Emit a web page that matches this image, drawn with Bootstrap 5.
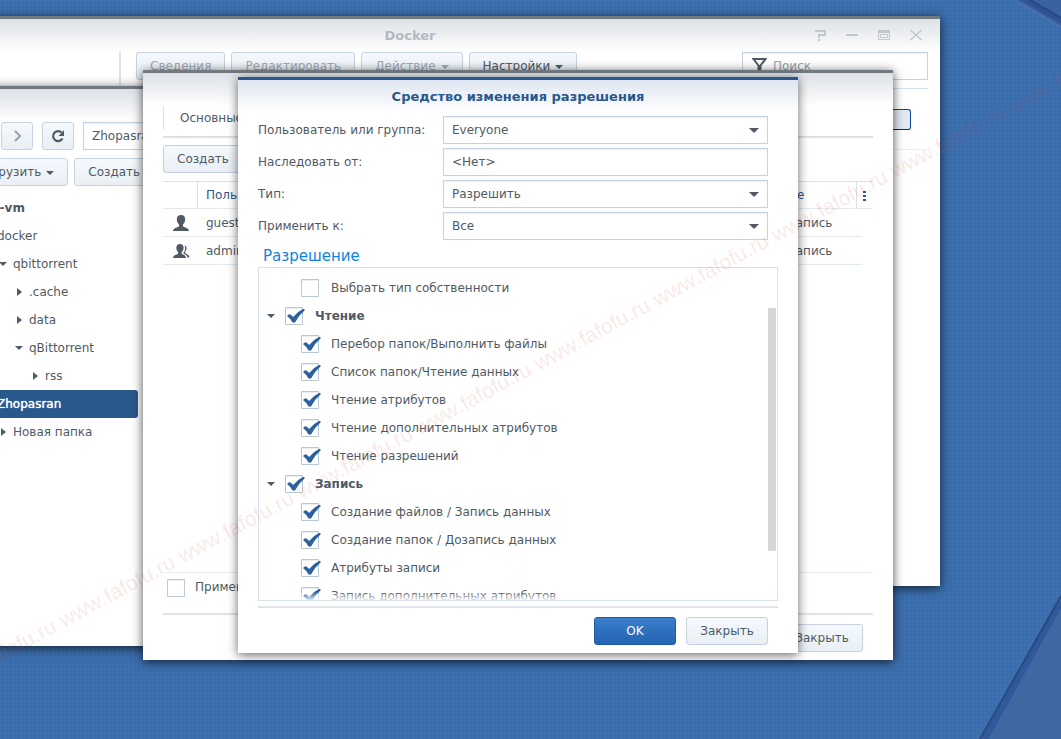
<!DOCTYPE html>
<html lang="ru">
<head>
<meta charset="utf-8">
<meta name="viewport" content="width=device-width, initial-scale=1">
<title>Средство изменения разрешения</title>
<link href="https://cdn.jsdelivr.net/npm/bootstrap@5.3.0/dist/css/bootstrap.min.css" rel="stylesheet">
<style>
  :root { --ink: #505a64; --line: #c6d2e0; --hair: #d9e2ec; --accent: #2a588c; }
  body { font: 12px/16px "DejaVu Sans", Verdana, sans-serif; color: var(--ink); }
  .desktop {
    height: 100vh;
    background:
      radial-gradient(circle at 1px 1px, rgba(255,255,255,.02) 1px, transparent 1px) 0 0 / 4px 4px,
      radial-gradient(circle at 3px 3px, rgba(0,0,40,.02) 1px, transparent 1px) 0 0 / 4px 4px,
      #3b6eae;
  }
  .wall-tr { top: 0; right: 0; }
  .wall-br { bottom: 0; right: 0; }
  .stamp { inset: 0; pointer-events: none; z-index: 10; }
  .stamp text { font-kerning: none; }

  /* windows placed on the desktop */
  .win { position: absolute; background: #fff; border-top: 3px solid #717981; box-shadow: 0 2px 10px rgba(0,0,0,.7); padding: 0 20px 8px; }
  .win-docker { left: -120px; top: 16px; width: 1060px; height: 570px; padding: 0 12px 0 20px; }
  .win-files { left: -57px; top: 86px; width: 700px; height: 560px; }
  .win-props { left: 143px; top: 70px; width: 750px; height: 590px; }
  .win-editor { left: 238px; top: 77px; width: 560px; height: 576px; border-top-color: #26578f; box-shadow: 0 2px 10px rgba(0,0,0,.6); }
  .win-bar { height: 33px; margin: 0 -20px; background: linear-gradient(#dde1e6, #fff); font-size: 13px; line-height: 33px; font-weight: 700; text-align: center; color: #b3b9c1; flex: none; }
  .win-docker > .win-bar { margin-right: -12px; }
  .win-editor > .win-bar { background: linear-gradient(#dfe6f1, #fff); color: var(--accent); margin-bottom: 3px; }
  .win-tools { right: 16px; top: 8px; }
  .win-tools button { border: 0; padding: 0; background: none; line-height: 0; }

  .tool-row { gap: 6px; }
  .dsm-btn { height: 28px; flex: none; padding: 0 13px; font-size: 12px; line-height: 26px; color: var(--ink); white-space: nowrap;
    background: linear-gradient(#f5f9fd, #e9eff4); border: 1px solid var(--line); border-radius: 3px; }
  .dsm-btn:disabled { color: #a0a8b4; }
  .dsm-btn.icon-only { width: 32px; padding: 0; line-height: 0; }
  .dsm-btn.wide { width: 82px; padding: 0; }
  .dsm-btn.main-act { color: #fff; background: linear-gradient(#3b7ecb, #2263b2); border-color: #1f5ca6; }
  .caret { width: 0; height: 0; display: inline-block; border: 4px solid transparent; border-top-color: currentColor; border-bottom: 0; margin-left: 5px; vertical-align: 1px; }

  .field { width: 100%; height: 28px; padding: 0 8px; border: 1px solid var(--line); border-radius: 0; font-size: 12px; line-height: 16px; color: var(--ink); background-color: #fff; box-shadow: inset 0 1px 1px rgba(0,0,0,.07); }
  .field::placeholder { color: #98a1ac; opacity: 1; }
  select.field { appearance: none; background: #fff url("data:image/svg+xml,%3Csvg xmlns='http://www.w3.org/2000/svg' width='10' height='5'%3E%3Cpath d='M0 0h10L5 5z' fill='%23505a64'/%3E%3C/svg%3E") no-repeat right 8px center; }
  .search { width: 186px; padding-left: 30px; }
  .search-icon { left: 10px; top: 5px; }

  .split { border-left: 2px solid #e0e3e7; margin-left: 219px; padding-left: 15px; }
  .pkg { margin-top: 8px; height: 62px; border-top: 1px solid var(--hair); border-bottom: 1px solid #e8edf3; padding: 20px 17px 0 0; }
  .toggle { appearance: none; width: 50px; height: 21px; margin: 0; border: 1px solid #0c479a; border-bottom-color: #0a2f66; border-radius: 3px; background: #e2eaf5; }

  .path-row { gap: 9px; }
  .pair { gap: 6px; }
  .tree { width: 175px; margin-top: 8px; }
  .tree a { display: flex; height: 28px; line-height: 28px; color: var(--ink); text-decoration: none; border-radius: 3px; white-space: nowrap; padding-left: 2px; }
  .tree .d1 { padding-left: 18px; } .tree .d2 { padding-left: 34px; } .tree .d3 { padding-left: 50px; } .tree .d4 { padding-left: 66px; }
  .tree a.current { background: #29588d; color: #fff; text-shadow: 0 0 1px #fff; }
  .tw { width: 16px; flex: none; display: flex; align-items: center; padding-left: 2px; color: var(--ink); }
  .tw::before { content: ""; border: 4px solid transparent; border-top-color: currentColor; border-bottom: 0; }
  .tw.shut { padding-left: 4px; }
  .tw.shut::before { border: 4px solid transparent; border-left: 5px solid currentColor; border-right: 0; }
  .tw.leaf::before { display: none; }

  .tab-strip { height: 30px; }
  .tab-strip a { height: 24px; line-height: 24px; padding: 0 16px; border-left: 1px solid var(--hair); color: var(--ink); text-decoration: none; white-space: nowrap; }
  .edge-down { height: 3px; flex: none; background: linear-gradient(#d2d4d6, #fff); margin-bottom: 6px; }
  .edge-up { height: 3px; flex: none; background: linear-gradient(#fff, #d6d8da); }

  .acl { width: 100%; table-layout: fixed; margin-top: 8px; border-collapse: separate; border-spacing: 0; }
  .acl th, .acl td { height: 28px; padding: 0 8px; border-bottom: 1px solid #e3eaf2; white-space: nowrap; overflow: hidden; }
  .acl th { font-weight: 400; color: var(--accent); border-top: 1px solid var(--hair); }
  .acl th:nth-child(2), .acl th:last-child { border-left: 1px solid var(--hair); }
  .acl th:last-child { padding: 0 6px; }
  .acl td:first-child { padding-left: 10px; }
  .acl td:nth-child(2) { padding-left: 9px; }
  .acl td:last-child { border-bottom: 0; padding: 0; background: linear-gradient(#e3eaf2, #e3eaf2) left bottom / 6px 1px no-repeat; }
  .w-icon { width: 34px; } .w-perm { width: 137px; } .w-menu { width: 17px; }
  .apply-row { height: 40px; padding: 6px 4px 0; border-top: 1px solid #e8edf3; }

  .tick { appearance: none; flex: none; margin: 0; width: 20px; height: 18px; background: url("data:image/svg+xml,%3Csvg xmlns='http://www.w3.org/2000/svg' width='20' height='18'%3E%3Cpath d='M.5 .5h17v17H.5z' fill='%23fff' stroke='%23bcc7d5'/%3E%3Cpath d='M1 1.5h16' stroke='%23eee'/%3E%3C/svg%3E") no-repeat; }
  .tick:checked { background-image: url("data:image/svg+xml,%3Csvg xmlns='http://www.w3.org/2000/svg' width='20' height='18'%3E%3Cpath d='M.5 .5h17v17H.5z' fill='%23fff' stroke='%23bcc7d5'/%3E%3Cpath d='M1 1.5h16' stroke='%23eee'/%3E%3Cpath d='M2 9 4.500 7Q7 8.500 8.200 10Q12.500 4.500 18.500 1.800L20 3Q14 8 10 15.500H7.500Q5.500 11.500 2 9Z' fill='%232c609f'/%3E%3C/svg%3E"); }

  .form-line { height: 28px; margin-bottom: 4px; padding-right: 10px; }
  .form-line label { width: 185px; flex: none; }
  .group-title { height: 27px; margin: -4px 0 0; padding: 6px 5px 0; font-size: 15px; line-height: 20px; font-weight: 400; color: #0f83e0; flex: none; }
  .form-line + .group-title { margin-top: -4px; }
  .perm-box { border: 1px solid var(--hair); padding: 6px 0 0 6px; min-height: 0; overflow: hidden; }
  .perm-box::after { content: ""; position: absolute; left: 0; right: 0; bottom: 0; height: 8px; background: linear-gradient(rgba(255,255,255,0), rgba(255,255,255,.85)); }
  .perm { height: 28px; flex: none; display: flex; align-items: center; padding-left: 36px; }
  .perm label { margin-left: 10px; }
  .perm.head { padding-left: 0; font-weight: 700; }
  .perm.head .tw { width: 20px; }
  .thumb { right: 1px; top: 40px; width: 8px; height: 243px; background: #d5d6d8; }
  .foot { padding: 9px 10px 0; gap: 10px; flex: none; }
</style>
</head>
<body>
<main class="desktop position-relative overflow-hidden">
  <svg class="wall-tr position-absolute" width="60" height="40" aria-hidden="true">
    <path d="M14 0 60 27V0Z" fill="#3862a2"/><path d="M14 0 60 27" stroke="#6f95c6" stroke-opacity=".5"/>
    <path d="M20 0 60 24V18L29 0Z" fill="#2f5494"/><path d="M29 0 60 18" stroke="#274783" stroke-width="2"/>
  </svg>
  <svg class="wall-br position-absolute" width="84" height="146" aria-hidden="true">
    <path d="M84 4 4 146H84Z" fill="#3d68a1"/><path d="M84 9 8 146" stroke="#30599b" stroke-width="6"/>
    <path d="M84 3 3 146" stroke="#284a7e" stroke-width="2"/>
  </svg>

  <section class="win win-docker d-flex flex-column" aria-label="Docker">
    <div class="win-bar position-relative">Docker
      <div class="win-tools position-absolute d-flex gap-3">
        <button type="button" aria-label="Справка"><svg width="16" height="16" fill="none" stroke="#c3c7cb" stroke-width="2"><path d="M3 4h10v4H7v3M7 12v2"/></svg></button>
        <button type="button" aria-label="Свернуть"><svg width="16" height="16" stroke="#c3c7cb" stroke-width="2"><path d="M2 8h12"/></svg></button>
        <button type="button" aria-label="Развернуть"><svg width="16" height="16" fill="none" stroke="#c3c7cb"><path d="M2.500 3.500h11v9h-11zM2 4.500h12M3 5.500h10M4.500 7.500h7v3h-7z"/></svg></button>
        <button type="button" aria-label="Закрыть окно"><svg width="16" height="16" stroke="#c3c7cb" stroke-width="1.500"><path d="M2.500 3 13.500 13M13.500 3 2.500 13"/></svg></button>
      </div>
    </div>
    <div class="split flex-fill">
      <div class="d-flex tool-row">
        <button class="dsm-btn" disabled type="button">Сведения</button>
        <button class="dsm-btn" disabled type="button">Редактировать</button>
        <button class="dsm-btn" disabled type="button">Действие<span class="caret"></span></button>
        <button class="dsm-btn" type="button">Настройки<span class="caret"></span></button>
        <div class="position-relative ms-auto">
          <svg class="search-icon position-absolute" width="15" height="16" aria-hidden="true"><path d="M1.500 2h12L8.500 8.500V15H6.500V8.500Z" fill="none" stroke="#505a64" stroke-width="2"/></svg>
          <input class="field search" type="search" placeholder="Поиск" aria-label="Поиск">
        </div>
      </div>
      <div class="pkg text-end"><input type="checkbox" class="toggle" aria-label="Состояние контейнера"></div>
    </div>
  </section>

  <section class="win win-files" aria-label="File Station">
    <div class="win-bar"></div>
    <div class="d-flex path-row">
      <div class="d-flex pair">
        <button class="dsm-btn icon-only" type="button" aria-label="Назад"><svg width="16" height="16" fill="none" stroke="#a0a8b4" stroke-width="2"><path d="M10 3 5 8l5 5"/></svg></button>
        <button class="dsm-btn icon-only" type="button" aria-label="Вперёд"><svg width="16" height="16" fill="none" stroke="#98a1ac" stroke-width="2"><path d="M6 3l5 5-5 5"/></svg></button>
      </div>
      <button class="dsm-btn icon-only" type="button" aria-label="Обновить"><svg width="16" height="16" fill="none" stroke="#505a64" stroke-width="2.200"><path d="M12.500 10.500A5 5 0 1 1 11.500 4.400"/><path d="M14 2v6H8.500Z" fill="#505a64" stroke="none"/></svg></button>
      <input class="field flex-fill" value="Zhopasran" aria-label="Путь">
    </div>
    <div class="d-flex pair mt-2">
      <button class="dsm-btn" type="button">Загрузить<span class="caret"></span></button>
      <button class="dsm-btn" type="button">Создать</button>
    </div>
    <nav class="tree">
      <a href="#" class="fw-bold"><span class="tw"></span>DS-vm</a>
      <a href="#" class="d1"><span class="tw shut"></span>docker</a>
      <a href="#" class="d2"><span class="tw"></span>qbittorrent</a>
      <a href="#" class="d3"><span class="tw shut"></span>.cache</a>
      <a href="#" class="d3"><span class="tw shut"></span>data</a>
      <a href="#" class="d3"><span class="tw"></span>qBittorrent</a>
      <a href="#" class="d4"><span class="tw shut"></span>rss</a>
      <a href="#" class="d1 current"><span class="tw leaf"></span>Zhopasran</a>
      <a href="#" class="d2"><span class="tw shut"></span>Новая папка</a>
    </nav>
  </section>

  <section class="win win-props d-flex flex-column" aria-label="Свойства">
    <div class="win-bar"></div>
    <nav class="tab-strip d-flex"><a href="#">Основные</a></nav>
    <div class="edge-down"></div>
    <div class="d-flex"><button class="dsm-btn" type="button">Создать</button></div>
    <table class="acl">
      <colgroup><col class="w-icon"><col><col class="w-perm"><col class="w-menu"></colgroup>
      <thead><tr><th></th><th>Пользователь</th><th>Разрешение</th><th><svg width="4" height="10" fill="#2a588c" aria-label="Столбцы"><path d="M0 0h3v2H0zM0 4h3v2H0zM0 8h3v2H0z"/></svg></th></tr></thead>
      <tbody>
        <tr><td><svg width="16" height="16" fill="#505a64" aria-hidden="true"><path d="M8 0c2.600 0 4.200 1.500 4.200 4.300C12.200 7 11 8.500 10 9.500v1.700c0 1 6 1.300 6 4.800H0c0-3.500 6-3.800 6-4.800V9.500C5 8.500 3.800 7 3.800 4.300 3.800 1.500 5.400 0 8 0z"/></svg></td><td>guest</td><td>Чтение и Запись</td><td></td></tr>
        <tr><td><svg width="17" height="16" fill="#505a64" aria-hidden="true"><path d="M7 1c2.300 0 3.600 1.300 3.600 3.800 0 2-1 3.400-1.900 4.200v1.500c0 .9 4.300 1.300 4.300 4.500H0c0-3.200 5.100-3.600 5.100-4.500V9C4.200 8.200 3.300 6.800 3.300 4.800 3.300 2.300 4.700 1 7 1z"/><path d="M11.500 2.500c2.500 0 2.700 4.500.7 6v1.500c.5 1 4.300 1.500 4.300 4.500h-2c-.5-2-1.500-2.700-4-4V9.500c1.700-1.500 2.200-5 1-7z"/></svg></td><td>admin</td><td>Чтение и Запись</td><td></td></tr>
      </tbody>
    </table>
    <div class="apply-row d-flex mt-auto align-items-start gap-2">
      <input class="tick" type="checkbox" id="sub"><label for="sub" class="text-nowrap">Применить к этой папке</label>
    </div>
    <div class="edge-up"></div>
    <div class="foot text-end"><button class="dsm-btn wide" type="button">Закрыть</button></div>
  </section>

  <section class="win win-editor d-flex flex-column" role="dialog" aria-labelledby="ttl">
    <div class="win-bar" id="ttl">Средство изменения разрешения</div>
    <div class="form-line d-flex align-items-center"><label for="who">Пользователь или группа:</label><select class="field" id="who"><option>Everyone</option></select></div>
    <div class="form-line d-flex align-items-center"><label for="inh">Наследовать от:</label><input class="field" id="inh" value="&lt;Нет&gt;"></div>
    <div class="form-line d-flex align-items-center"><label for="kind">Тип:</label><select class="field" id="kind"><option>Разрешить</option></select></div>
    <div class="form-line d-flex align-items-center"><label for="scope">Применить к:</label><select class="field" id="scope"><option>Все</option></select></div>
    <h2 class="group-title">Разрешение</h2>
    <div class="perm-box position-relative flex-fill d-flex flex-column">
      <div class="perm"><input class="tick" type="checkbox" id="p0"><label for="p0">Выбрать тип собственности</label></div>
      <div class="perm head"><span class="tw"></span><input class="tick" type="checkbox" checked id="p1"><label for="p1">Чтение</label></div>
      <div class="perm"><input class="tick" type="checkbox" checked id="p2"><label for="p2">Перебор папок/Выполнить файлы</label></div>
      <div class="perm"><input class="tick" type="checkbox" checked id="p3"><label for="p3">Список папок/Чтение данных</label></div>
      <div class="perm"><input class="tick" type="checkbox" checked id="p4"><label for="p4">Чтение атрибутов</label></div>
      <div class="perm"><input class="tick" type="checkbox" checked id="p5"><label for="p5">Чтение дополнительных атрибутов</label></div>
      <div class="perm"><input class="tick" type="checkbox" checked id="p6"><label for="p6">Чтение разрешений</label></div>
      <div class="perm head"><span class="tw"></span><input class="tick" type="checkbox" checked id="p7"><label for="p7">Запись</label></div>
      <div class="perm"><input class="tick" type="checkbox" checked id="p8"><label for="p8">Создание файлов / Запись данных</label></div>
      <div class="perm"><input class="tick" type="checkbox" checked id="p9"><label for="p9">Создание папок / Дозапись данных</label></div>
      <div class="perm"><input class="tick" type="checkbox" checked id="p10"><label for="p10">Атрибуты записи</label></div>
      <div class="perm"><input class="tick" type="checkbox" checked id="p11"><label for="p11">Запись дополнительных атрибутов</label></div>
      <div class="thumb position-absolute"></div>
    </div>
    <div class="edge-up mt-1"></div>
    <div class="foot d-flex justify-content-end"><button class="dsm-btn wide main-act" type="button">OK</button><button class="dsm-btn wide" type="button">Закрыть</button></div>
  </section>

  <svg class="stamp position-absolute w-100 h-100" aria-hidden="true">
    <text transform="translate(-55 692) rotate(-28.400)" font-family="Liberation Sans, Arial, sans-serif" font-size="21" fill="#d9372c" fill-opacity=".12"><tspan x="0">www.fafofu.ru</tspan><tspan x="135">www.fafofu.ru</tspan><tspan x="270">www.fafofu.ru</tspan><tspan x="405">www.fafofu.ru</tspan><tspan x="540">www.fafofu.ru</tspan><tspan x="675">www.fafofu.ru</tspan><tspan x="810">www.fafofu.ru</tspan><tspan x="945">www.fafofu.ru</tspan><tspan x="1080">www.fafofu.ru</tspan><tspan x="1215">www.fafofu.ru</tspan></text>
  </svg>
</main>
<script src="https://cdn.jsdelivr.net/npm/bootstrap@5.3.0/dist/js/bootstrap.bundle.min.js"></script>
</body>
</html>
